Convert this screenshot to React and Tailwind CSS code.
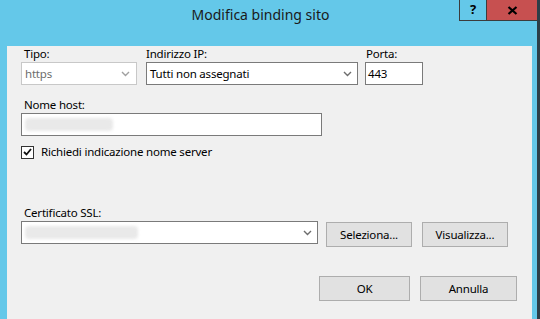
import React from "react";

const font = { fontFamily: '"Noto Sans", "Open Sans", sans-serif' };

const Chevron = ({ color = "#6d6d6d" }) => (
  <svg width="9" height="6" viewBox="0 0 9 6" className="shrink-0">
    <path d="M1 1 L4.5 4.5 L8 1" fill="none" stroke={color} strokeWidth="1.4" />
  </svg>
);

const Blur = ({ w }) => (
  <div className={`h-[13px] ${w} bg-[#e9e9e9] blur-[1.5px] rounded-sm`} />
);

const Btn = ({ children, className = "" }) => (
  <button
    className={`flex items-center justify-center h-[25px] bg-[#e1e1e1] border border-[#adadad] text-black ${className}`}
  >
    {children}
  </button>
);

export default function App() {
  return (
    <div
      className="relative w-[540px] h-[319px] bg-[#64c8e9] overflow-hidden"
      style={font}
    >
      {/* Title bar */}
      <div className="relative h-[30px] flex items-center justify-center">
        <span className="text-[14px] text-[#1a1a1a] -mt-[1px] ml-[-19px]">
          Modifica binding sito
        </span>
        <div className="absolute top-0 right-[2px] flex h-[21px] border border-t-0 border-[#3c3c3c]">
          <div className="w-[27px] flex items-center justify-center border-r border-[#3c3c3c] text-[13px] font-bold text-black">
            ?
          </div>
          <div className="w-[50px] bg-[#c75050] flex items-center justify-center">
            <svg width="11" height="9" viewBox="0 0 11 9">
              <path d="M1.5 1 L9.5 8 M9.5 1 L1.5 8" stroke="#000" strokeWidth="2.2" />
            </svg>
          </div>
        </div>
      </div>
      <div className="absolute top-0 right-0 w-[3px] h-full bg-[#2c3e48]" />

      {/* Client area */}
      <div className="ml-[7px] w-[525px] h-[283px] bg-[#f0f0f0] border-b border-[#b9c8cf] pl-[14px] text-[11.5px] tracking-[-0.2px] text-black">
        <div className="flex mt-[16px] leading-[16px]">
          <div className="w-[125px] pl-[3px]">Tipo:</div>
          <div className="w-[219px]">Indirizzo IP:</div>
          <div className="pl-[1px]">Porta:</div>
        </div>
        <div className="flex mt-[0px] h-[23px]">
          <div className="w-[116px] h-full border border-[#c8c8c8] bg-white flex items-center justify-between pl-[3px] pr-[6px] text-[#6d6d6d]">
            <span>https</span>
            <Chevron color="#a0a0a0" />
          </div>
          <div className="ml-[9px] w-[212px] h-full border border-[#7a7a7a] bg-white flex items-center justify-between pl-[3px] pr-[5px]">
            <span>Tutti non assegnati</span>
            <Chevron />
          </div>
          <div className="ml-[7px] w-[58px] h-full border border-[#7a7a7a] bg-white flex items-center pl-[2px]">
            443
          </div>
        </div>

        <div className="mt-[12px] pl-[3px] leading-[16px]">Nome host:</div>
        <div className="mt-[0px] w-[301px] h-[23px] border border-[#7a7a7a] bg-white flex items-center pl-[3px]">
          <Blur w="w-[88px]" />
        </div>

        <label className="mt-[9px] flex items-center h-[14px]">
          <span className="w-[13px] h-[13px] border border-[#333] bg-white flex items-center justify-center">
            <svg width="9" height="8" viewBox="0 0 9 8">
              <path d="M1 4 L3.5 6.5 L8 1" fill="none" stroke="#111" strokeWidth="1.8" />
            </svg>
          </span>
          <span className="ml-[7px]">Richiedi indicazione nome server</span>
        </label>

        <div className="mt-[46px] pl-[3px] leading-[16px]">Certificato SSL:</div>
        <div className="flex mt-[0px] items-start">
          <div className="w-[297px] h-[23px] border border-[#7a7a7a] bg-white flex items-center justify-between pl-[3px] pr-[5px]">
            <Blur w="w-[113px]" />
            <Chevron />
          </div>
          <Btn className="ml-[8px] mt-[1px] w-[86px]">Seleziona...</Btn>
          <Btn className="ml-[10px] mt-[1px] w-[86px]">Visualizza...</Btn>
        </div>

        <div className="flex mt-[29px] pl-[298px]">
          <Btn className="w-[91px] border-[#3c7fb1]">OK</Btn>
          <Btn className="ml-[10px] w-[97px]">Annulla</Btn>
        </div>
      </div>
    </div>
  );
}
